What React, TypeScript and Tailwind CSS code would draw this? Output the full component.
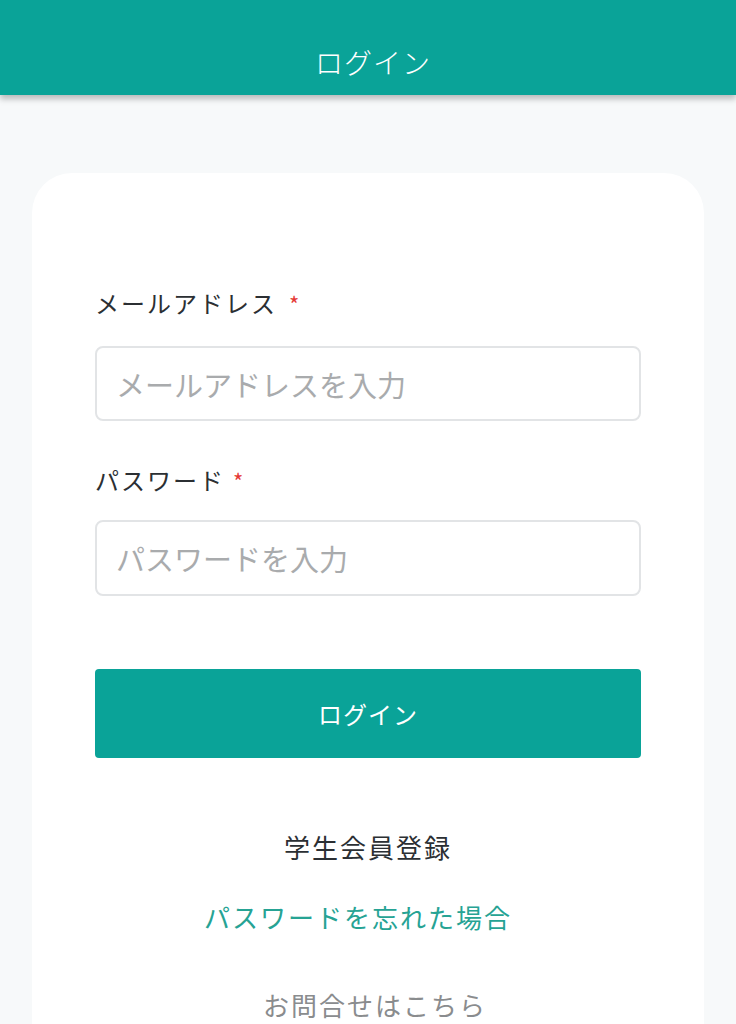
export default function App() {
  const jp = "font-['Noto_Sans_CJK_JP','Noto_Sans',sans-serif]";

  return (
    <div className={`min-h-screen bg-[#f7f9fa] ${jp}`}>
      <header className="h-[95px] bg-[#0aa398] pt-[29px] pl-[10px] flex items-center justify-center shadow-[0_4px_6px_rgba(0,0,0,0.25)] relative z-10">
        <h1 className="text-white text-[28px] font-light tracking-[1px] font-['Noto_Sans_CJK_JP',serif]">
          ログイン
        </h1>
      </header>

      <main className="px-8 pt-[78px]">
        <div className="bg-white rounded-[40px] px-[63px] pt-[112px] pb-[40px]">
          <form>
            <label className="flex items-center gap-[12px] text-[24px] leading-[36px] text-[#2b2f33] tracking-[2px] mb-[25px]">
              メールアドレス
              <span className="text-[#e53935] text-[22px]">*</span>
            </label>
            <input
              type="email"
              placeholder="メールアドレスを入力"
              className="w-full h-[75px] rounded-lg border-2 border-[#e2e4e6] px-[19px] text-[29px] placeholder:text-[#a9abad] outline-none"
            />

            <label className="flex items-center gap-[8px] text-[24px] leading-[36px] text-[#2b2f33] tracking-[2px] mt-[41px] mb-[22px]">
              パスワード
              <span className="text-[#e53935] text-[22px]">*</span>
            </label>
            <input
              type="password"
              placeholder="パスワードを入力"
              className="w-full h-[76px] rounded-lg border-2 border-[#e2e4e6] px-[19px] text-[29px] placeholder:text-[#a9abad] outline-none"
            />

            <button
              type="button"
              className="w-full h-[89px] mt-[73px] bg-[#0aa398] rounded text-white text-[24px] tracking-[1px]"
            >
              ログイン
            </button>
          </form>

          <div className="flex flex-col items-center mt-[69px]">
            <a className="text-[26px] leading-[40px] tracking-[2px] text-[#2b2f33]">学生会員登録</a>
            <a className="text-[26px] leading-[40px] tracking-[2px] text-[#26a394] mt-[30px] mr-[20px]">
              パスワードを忘れた場合
            </a>
            <a className="text-[26px] leading-[40px] tracking-[2px] text-[#8a8c8e] mt-[48px] ml-[14px]">
              お問合せはこちら
            </a>
          </div>
        </div>
      </main>
    </div>
  );
}
